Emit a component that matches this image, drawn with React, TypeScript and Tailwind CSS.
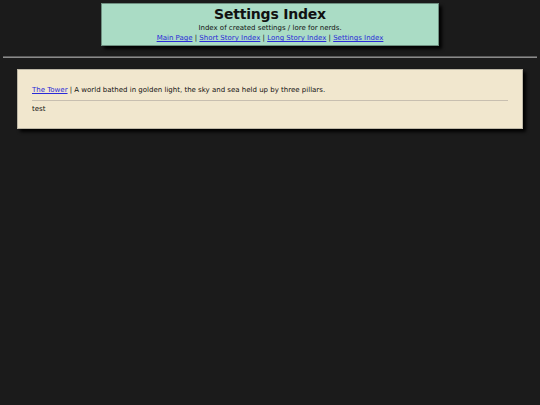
import React from "react";

export default function App() {
  return (
    <div className="min-h-[405px] w-full bg-[#1b1b1b] pt-[3px] text-[#111]" style={{ fontFamily: '"DejaVu Sans", Verdana, sans-serif' }}>
      <div className="mx-auto flex w-[338px] h-[43px] flex-col items-center border border-[#6e8f80] bg-[#aadcc5] shadow-[3px_3px_3px_rgba(0,0,0,0.9)]">
        <div className="mt-[2px] text-[14px] font-bold leading-[17px] tracking-[-0.2px]">Settings Index</div>
        <div className="text-[7px] leading-[10px]">Index of created settings / lore for nerds.</div>
        <div className="text-[7px] leading-[11px]">
          <a href="#" className="text-[#2a2ad8] underline">Main Page</a> |{" "}
          <a href="#" className="text-[#2a2ad8] underline">Short Story Index</a> |{" "}
          <a href="#" className="text-[#2a2ad8] underline">Long Story Index</a> |{" "}
          <a href="#" className="text-[#2a2ad8] underline">Settings Index</a>
        </div>
      </div>
      <div className="mx-[3px] mt-[10px] h-[2px] border-t border-[#5a5a5a] bg-[#8a8a8a]"></div>
      <div className="mx-[17px] mt-[11px] border border-[#bdb7a6] bg-[#f1e7ce] px-[14px] pt-[15px] pb-[14px] shadow-[3px_3px_3px_rgba(0,0,0,0.9)]">
        <div className="text-[7px] leading-[10px]">
          <a href="#" className="text-[#2a2ad8] underline">The Tower</a> | A world bathed in golden light, the sky and sea held up by three pillars.
        </div>
        <div className="mt-[5px] h-px bg-[#c8bfb0]"></div>
        <div className="mt-[3px] text-[7px] leading-[10px]">test</div>
      </div>
    </div>
  );
}
